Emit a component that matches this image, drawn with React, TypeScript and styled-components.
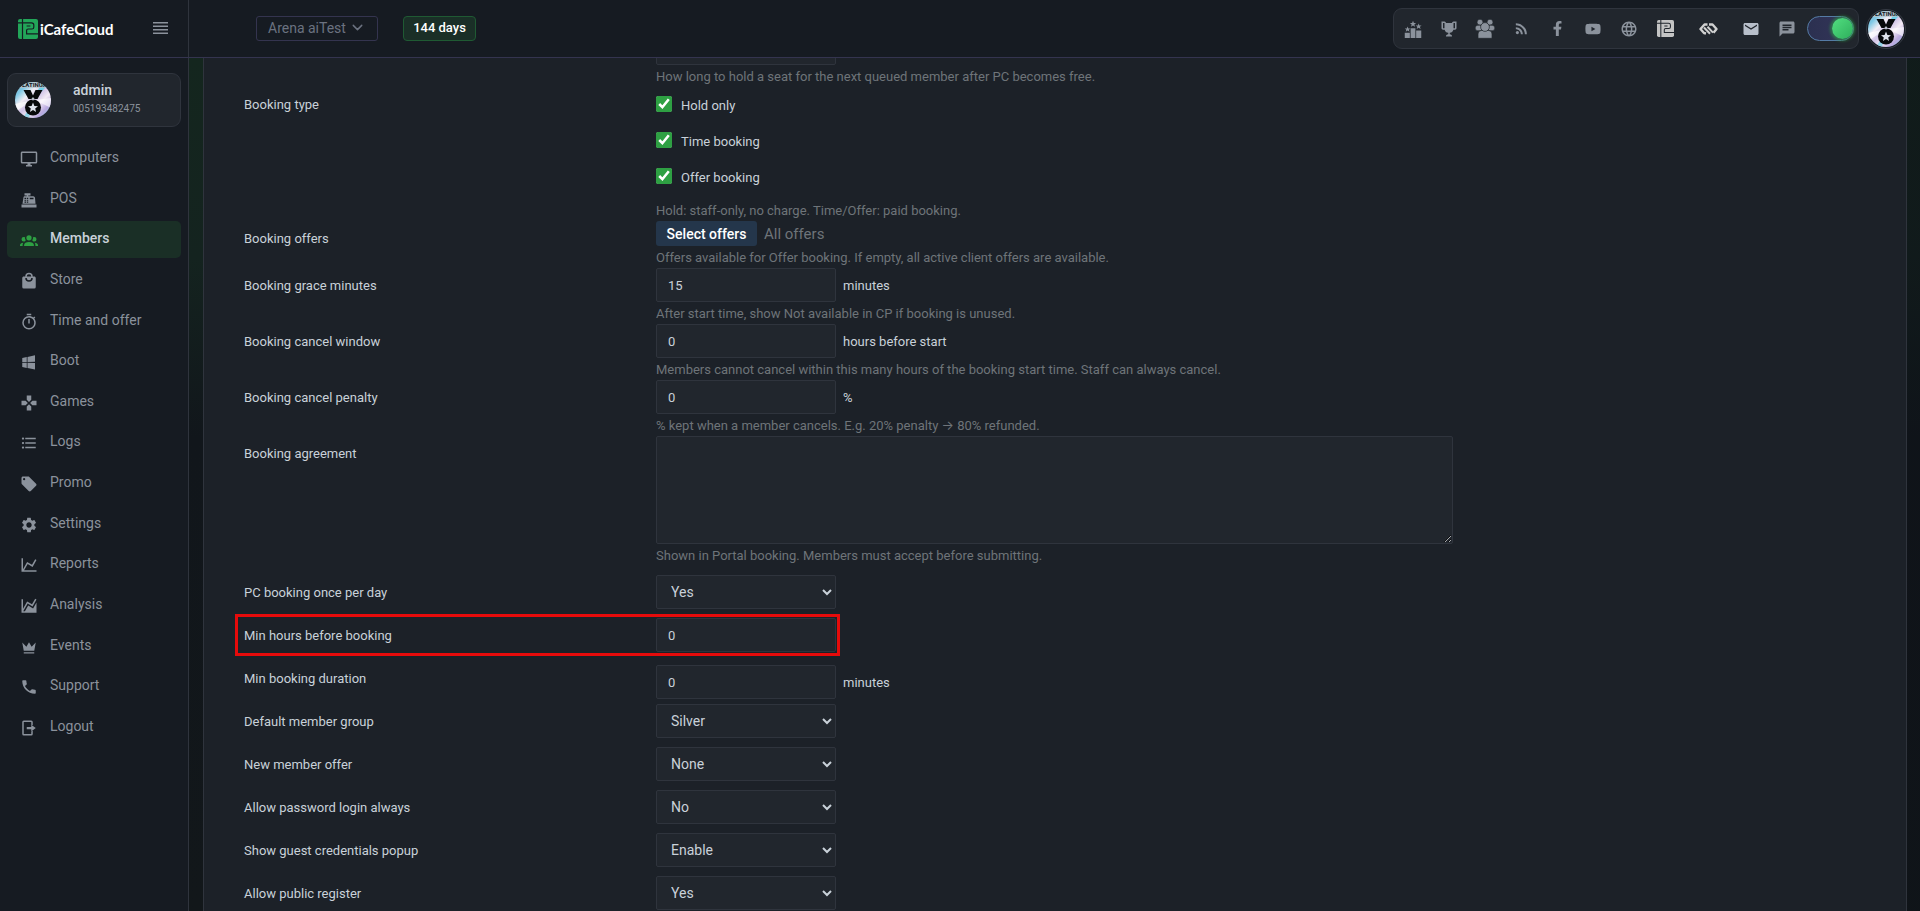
import React, { useId, useState } from 'react';
import styled, { createGlobalStyle } from 'styled-components';
import { MdSettings, MdPhone, MdRssFeed, MdLanguage, MdEmail, MdChat, MdFormatListBulleted } from 'react-icons/md';
import { FaFacebookF, FaYoutube } from 'react-icons/fa';
import { ChevronDown } from 'lucide-react';

const c = {
  chrome: '#161b22',
  panel: '#1c2128',
  field: '#21262d',
  line: '#2f343d',
  rule: '#34344f',
  text: '#c9d1d9',
  muted: '#6e7479',
  icon: '#8b929c',
  green: '#2ea043',
};

const GlobalStyle = createGlobalStyle`
  * { box-sizing: border-box; }
  body { margin: 0; background: #0d1117; font-family: Roboto, Inter, 'Liberation Sans', sans-serif; font-size: 13px; color: ${c.text}; }
  button, input, select, textarea { font: inherit; color: inherit; }
`;

const Page = styled.div`
  display: flex;
  flex-direction: column;
  height: 100vh;
  overflow: hidden;
`;

const Header = styled.header`
  display: flex;
  align-items: center;
  flex: none;
  height: 58px;
  padding-right: 14px;
  background: ${c.chrome};
  border-bottom: 1px solid ${c.rule};
`;

const Brand = styled.div`
  display: flex;
  align-items: center;
  align-self: stretch;
  justify-content: space-between;
  flex: none;
  width: 189px;
  padding: 0 20px 0 18px;
  border-right: 1px solid ${c.line};
`;

const Logo = styled.a`
  display: flex;
  align-items: center;
  gap: 2px;
  color: #fff;
  font: 700 15px/20px Lato, sans-serif;
  text-decoration: none;
`;

const IconButton = styled.button<{ $w?: number; $tone?: string }>`
  display: flex;
  align-items: center;
  justify-content: center;
  width: ${(p) => p.$w ?? 36}px;
  height: 36px;
  padding: 0;
  border: 0;
  background: none;
  color: ${(p) => p.$tone ?? c.icon};
`;

const CafeButton = styled.button`
  display: flex;
  align-items: center;
  justify-content: space-between;
  width: 122px;
  height: 25px;
  margin: 0 25px 0 67px;
  padding: 0 11px 2px 11px;
  border: 1px solid ${c.rule};
  border-radius: 3px;
  background: none;
  color: #6b7280;
  font-size: 14px;
  white-space: nowrap;
`;

const DaysBadge = styled.span`
  display: flex;
  align-items: center;
  justify-content: center;
  width: 73px;
  height: 25px;
  padding-bottom: 2px;
  border: 1px solid #1f5a33;
  border-radius: 4px;
  background: #1a2f27;
  color: #fff;
  font-weight: 500;
  white-space: nowrap;
`;

const Tools = styled.div`
  display: flex;
  align-items: center;
  height: 41px;
  margin: 0 7px 0 auto;
  padding: 0 4px 0 1px;
  border: 1px solid ${c.line};
  border-radius: 9px;
  background: ${c.field};
`;

const Switch = styled.input`
  appearance: none;
  display: flex;
  align-items: center;
  justify-content: flex-end;
  width: 47px;
  height: 25px;
  margin: 0 0 0 2px;
  padding: 0;
  border: 1px solid #557ba5;
  border-radius: 13px;
  background: linear-gradient(90deg, #2b3050, #35355a);
  &::before {
    content: '';
    width: 21px;
    height: 21px;
    border-radius: 50%;
    background: linear-gradient(135deg, #52df80, #2eae5c);
    box-shadow: 0 0 3px 2px rgba(46, 160, 67, 0.6);
  }
  &:not(:checked) { justify-content: flex-start; }
`;

const AvatarButton = styled.button`
  display: flex;
  padding: 1px;
  border: 1px solid #363b44;
  border-radius: 50%;
  background: none;
`;

const Body = styled.div`
  display: flex;
  flex: 1;
  min-height: 0;
`;

const Sidebar = styled.aside`
  flex: none;
  width: 189px;
  padding: 15px 7px;
  border-right: 1px solid ${c.line};
  background: ${c.chrome};
`;

const UserCard = styled.div`
  display: flex;
  align-items: center;
  gap: 22px;
  height: 54px;
  padding: 0 7px;
  border: 1px solid ${c.line};
  border-radius: 9px;
  background: ${c.field};
`;

const UserName = styled.div`
  font-size: 14px;
  font-weight: 500;
  line-height: 18px;
`;

const UserId = styled.div`
  color: ${c.icon};
  font-size: 10px;
  line-height: 20px;
`;

const Nav = styled.nav`
  display: flex;
  flex-direction: column;
  justify-content: space-between;
  height: 606px;
  margin-top: 13px;
`;

const NavLink = styled.a<{ $active: boolean }>`
  display: flex;
  align-items: center;
  gap: 12px;
  height: 37px;
  padding: 0 13px;
  border-radius: 5px;
  background: ${(p) => (p.$active ? '#1a2f26' : 'none')};
  color: ${(p) => (p.$active ? c.text : c.icon)};
  font-size: 14px;
  font-weight: ${(p) => (p.$active ? 500 : 400)};
  line-height: 34px;
  text-decoration: none;
  svg {
    flex: none;
    margin-top: 1px;
    color: ${(p) => (p.$active ? c.green : c.icon)};
  }
  span { align-self: flex-start; }
`;

const Main = styled.main`
  display: flex;
  flex: 1;
  min-width: 0;
  padding: 0 13px 0 14px;
  background: linear-gradient(90deg, rgba(13, 17, 23, 0) 0%, rgba(13, 17, 23, 0.5) 100%),
    linear-gradient(180deg, #14261e 0, #14231f 200px, #11161b 380px, #12171a 100%);
`;

const Panel = styled.section`
  flex: 1;
  min-width: 0;
  overflow: hidden;
  padding: 0 30px 0 28px;
  border: 1px solid ${c.line};
  border-width: 0 1px;
  background: ${c.panel};
`;

const Form = styled.form`
  margin-top: -27px;
`;

const Row = styled.div<{ $gap: number; $marked?: boolean }>`
  position: relative;
  display: grid;
  grid-template-columns: 1fr 2fr 1fr;
  margin-bottom: ${(p) => p.$gap}px;
  ${(p) =>
    p.$marked &&
    `&::after {
      content: '';
      position: absolute;
      top: -4px;
      bottom: -4px;
      left: 3px;
      width: calc(25% + 194px);
      box-sizing: border-box;
      border: 3px solid #e60b0b;
      pointer-events: none;
    }`}
`;

const Label = styled.label`
  height: 34px;
  padding: 1px 12px 0;
  line-height: 34px;
  white-space: nowrap;
`;

const Cell = styled.div<{ $drop?: boolean }>`
  min-width: 0;
  padding: ${(p) => (p.$drop ? 4 : 0)}px 12px 0 13px;
`;

const Line = styled.div`
  display: flex;
  align-items: center;
  gap: 7px;
`;

const Field = styled.input`
  width: 180px;
  height: 34px;
  padding: 0 11px;
  border: 1px solid ${c.line};
  border-radius: 2px;
  background: ${c.field};
  outline: 0;
`;

const Dropdown = styled.select`
  display: block;
  width: 180px;
  height: 34px;
  padding: 0 0 0 10px;
  border: 1px solid ${c.line};
  border-radius: 2px;
  background: ${c.field};
  font-size: 14px;
  outline: 0;
`;

const Area = styled.textarea`
  display: block;
  width: 100%;
  height: 108px;
  padding: 8px 11px;
  border: 1px solid ${c.line};
  border-radius: 2px;
  background: ${c.field};
  color-scheme: dark;
  outline: 0;
  resize: both;
`;

const Help = styled.div`
  padding-top: 2px;
  color: ${c.muted};
  line-height: 20px;
  white-space: nowrap;
`;

const Checks = styled.div`
  display: flex;
  flex-direction: column;
  margin-bottom: 4px;
`;

const Check = styled.label`
  display: flex;
  align-items: center;
  gap: 9px;
  height: 36px;
  input {
    width: 16px;
    height: 16px;
    margin: 0 0 3px;
    accent-color: ${c.green};
  }
`;

const OfferButton = styled.button`
  width: 101px;
  height: 25px;
  padding: 0;
  border: 0;
  border-radius: 3px;
  background: #24364b;
  color: #fff;
  font-size: 14px;
  font-weight: 500;
  white-space: nowrap;
`;

const OfferNote = styled.span`
  color: ${c.muted};
  font-size: 15px;
  line-height: 18px;
`;

function Glyph({ d, size = 18 }: { d: string; size?: number }) {
  return (
    <svg width={size} height={size} viewBox="0 0 24 24" fill="currentColor" fillRule="evenodd" aria-hidden>
      <path d={d} />
    </svg>
  );
}

const shapes = {
  monitor: 'M21,16H3V4H21M21,2H3C1.89,2 1,2.89 1,4V16A2,2 0 0,0 3,18H10V20H8V22H16V20H14V18H21A2,2 0 0,0 23,16V4C23,2.89 22.1,2 21,2Z',
  register:
    'M2,18H22V22H2ZM6.25,7H9V6H6V3H14V6H11V7H17.8C18.8,7 19.8,8 20,9L20.7,17H3.3L4.6,8.6C4.8,7.6 5.4,7 6.25,7ZM13,9V11H18V9ZM6,9V10.5H8V9ZM9,9V10.5H11V9ZM6,11.5V13H8V11.5ZM9,11.5V13H11V11.5ZM6,14V15.5H8V14ZM9,14V15.5H11V14Z',
  group:
    'M12,5.5A3.5,3.5 0 0,1 15.5,9A3.5,3.5 0 0,1 12,12.5A3.5,3.5 0 0,1 8.5,9A3.5,3.5 0 0,1 12,5.5M5,8C5.56,8 6.08,8.15 6.53,8.42C6.38,9.85 6.8,11.27 7.66,12.38C7.16,13.34 6.16,14 5,14A3,3 0 0,1 2,11A3,3 0 0,1 5,8M19,8A3,3 0 0,1 22,11A3,3 0 0,1 19,14C17.84,14 16.84,13.34 16.34,12.38C17.2,11.27 17.62,9.85 17.47,8.42C17.92,8.15 18.44,8 19,8M5.5,18.25C5.5,16.18 8.41,14.5 12,14.5C15.59,14.5 18.5,16.18 18.5,18.25V20H5.5V18.25M0,20V18.5C0,17.11 1.89,15.94 4.45,15.6C3.86,16.28 3.5,17.22 3.5,18.25V20H0M24,20H20.5V18.25C20.5,17.22 20.14,16.28 19.55,15.6C22.11,15.94 24,17.11 24,18.5V20Z',
  bag: 'M12,13A5,5 0 0,1 7,8H9A3,3 0 0,0 12,11A3,3 0 0,0 15,8H17A5,5 0 0,1 12,13M12,3A3,3 0 0,1 15,6H9A3,3 0 0,1 12,3M19,6H17A5,5 0 0,0 12,1A5,5 0 0,0 7,6H5C3.89,6 3,6.89 3,8V20A2,2 0 0,0 5,22H19A2,2 0 0,0 21,20V8C21,6.89 20.1,6 19,6Z',
  timer:
    'M12,20A7,7 0 0,1 5,13A7,7 0 0,1 12,6A7,7 0 0,1 19,13A7,7 0 0,1 12,20M19.03,7.39L20.45,5.97C20,5.46 19.55,5 19.04,4.56L17.62,6C16.07,4.74 14.12,4 12,4A9,9 0 0,0 3,13A9,9 0 0,0 12,22C17,22 21,17.97 21,13C21,10.88 20.26,8.93 19.03,7.39M11,14H13V8H11M15,1H9V3H15V1Z',
  windows: 'M3,12V6.75L9,5.43V11.91L3,12M20,3V11.75L10,11.9V5.21L20,3M3,13L9,13.09V19.9L3,18.75V13M20,13.25V22L10,20.09V13.1L20,13.25Z',
  gamepad: 'M16.5,9L13.5,12L16.5,15H22V9M9,16.5V22H15V16.5L12,13.5M7.5,9H2V15H7.5L10.5,12M15,7.5V2H9V7.5L12,10.5L15,7.5Z',
  tag: 'M5.5,7A1.5,1.5 0 0,1 4,5.5A1.5,1.5 0 0,1 5.5,4A1.5,1.5 0 0,1 7,5.5A1.5,1.5 0 0,1 5.5,7M21.41,11.58L12.41,2.58C12.05,2.22 11.55,2 11,2H4C2.89,2 2,2.89 2,4V11C2,11.55 2.22,12.05 2.59,12.41L11.58,21.41C11.95,21.77 12.45,22 13,22C13.55,22 14.05,21.77 14.41,21.41L21.41,14.41C21.78,14.05 22,13.55 22,13C22,12.44 21.77,11.94 21.41,11.58Z',
  chart: 'M16,11.78L20.24,4.45L21.97,5.45L16.74,14.5L10.23,10.75L5.46,19H22V21H2V3H4V17.54L9.5,8L16,11.78Z',
  area: 'M17.45,15.18L22,7.31V19L22,21H2V3H4V15.54L9.5,6L16,9.78L20.24,2.45L21.97,3.45L16.74,12.5L10.23,8.75L4.31,19H6.57L10.96,11.44L17.45,15.18Z',
  crown: 'M5,17L3,6L8.5,11.5L12,5.5L15.5,11.5L21,6L19,17H5M5,19H19V20.5H5Z',
  exit: 'M5,2H15A2,2 0 0,1 17,4V8H15V4H5V20H15V16H17V20A2,2 0 0,1 15,22H5A2,2 0 0,1 3,20V4A2,2 0 0,1 5,2ZM9,10.5H15V7.5L21,12L15,16.5V13.5H9Z',
  trophy:
    'M20.2,2H18C17.1,2 16,3 16,4H8C8,3 6.9,2 6,2H2V11C2,12 3,13 4,13H6.2C6.6,15 7.9,16.7 11,17V19.1C8.8,19.3 8,20.4 8,21.7V22H16V21.7C16,20.4 15.2,19.3 13,19.1V17C16.1,16.7 17.4,15 17.8,13H20C21,13 22,12 22,11V2ZM4,11V4H6V11ZM20,11H18V4H20Z',
  podium:
    'M1,17H7.8V24H1ZM8.8,11H15.2V24H8.8ZM16.2,14H23V24H16.2ZM4.8,8.5L5.9,11.2H8.6L6.5,12.9L7.3,15.6L4.8,14L2.3,15.6L3.1,12.9L1,11.2H3.700ZM12,1L13.2,3.900H16.200L13.8,5.900L14.7,9L12,7.200L9.300,9L10.2,5.900L7.800,3.900H10.8ZM19.5,4.500L20.600,7.300H23.500L21.200,9.100L22.100,12L19.500,10.300L16.900,12L17.800,9.100L15.500,7.300H18.400Z',
};

const entries: [string, React.ReactNode][] = [
  ['Computers', <Glyph d={shapes.monitor} />],
  ['POS', <Glyph d={shapes.register} />],
  ['Members', <Glyph d={shapes.group} />],
  ['Store', <Glyph d={shapes.bag} />],
  ['Time and offer', <Glyph d={shapes.timer} />],
  ['Boot', <Glyph d={shapes.windows} />],
  ['Games', <Glyph d={shapes.gamepad} />],
  ['Logs', <MdFormatListBulleted size={18} />],
  ['Promo', <Glyph d={shapes.tag} />],
  ['Settings', <MdSettings size={18} />],
  ['Reports', <Glyph d={shapes.chart} />],
  ['Analysis', <Glyph d={shapes.area} />],
  ['Events', <Glyph d={shapes.crown} />],
  ['Support', <MdPhone size={18} />],
  ['Logout', <Glyph d={shapes.exit} />],
];

function Mark({ size, fill, cut }: { size: number; fill: string; cut: string }) {
  return (
    <svg width={size} height={size} viewBox="0 0 20 20" aria-hidden>
      <rect width="20" height="20" rx="2" fill={fill} />
      <path d="M4.5 0V20M0 3.8H13.5Q15.8 3.8 15.8 6V8.2Q15.8 10 14 10H10.2Q8.6 10 8.6 11.6V14.8H20M8.6 7H12.4" fill="none" stroke={cut} strokeWidth="1.2" />
    </svg>
  );
}

function Crowd() {
  return (
    <svg width="20" height="20" viewBox="0 0 20 20" fill="currentColor" stroke={c.field} strokeWidth="0.7" aria-hidden>
      <circle cx="5" cy="3.2" r="3" />
      <circle cx="15" cy="3.2" r="3" />
      <rect x="0.2" y="6.2" width="7" height="5.6" rx="2.6" />
      <rect x="12.8" y="6.2" width="7" height="5.6" rx="2.6" />
      <path d="M3 19.3V15Q3 11.4 6.5 11.4H13.5Q17 11.4 17 15V19.3Z" />
      <circle cx="10" cy="8" r="4.4" />
    </svg>
  );
}

function Hands() {
  return (
    <svg width="19" height="12" viewBox="0 0 19 12" fill="none" stroke="currentColor" strokeLinejoin="round" aria-hidden>
      <path d="M8.500 1.500H5.500L1.500 6L5 10L7 10.500" strokeWidth="2.400" />
      <path d="M5 4.500L11 10.800M8.500 3.800L14 9.600" strokeWidth="2" />
      <path d="M10 1.500H13.500L17.500 6L14.500 9.800" strokeWidth="2.400" />
    </svg>
  );
}

function Avatar() {
  const id = useId();
  return (
    <svg width="36" height="36" viewBox="0 0 36 36" role="img" aria-label="Platinum medal">
      <defs>
        <linearGradient id={`${id}g`} x1="0" y1="0" x2="1" y2="1">
          <stop offset="0" stopColor="#9fb4c4" />
          <stop offset="0.2" stopColor="#7cc7e4" />
          <stop offset="0.36" stopColor="#f2eef5" />
          <stop offset="0.5" stopColor="#cfc2e6" />
          <stop offset="0.64" stopColor="#f3eaf4" />
          <stop offset="0.8" stopColor="#b9a8df" />
          <stop offset="1" stopColor="#8fd6e8" />
        </linearGradient>
        <clipPath id={`${id}c`}>
          <circle cx="18" cy="18" r="18" />
        </clipPath>
      </defs>
      <g clipPath={`url(#${id}c)`}>
        <rect width="36" height="36" fill={`url(#${id}g)`} />
        <path d="M36 0L18 18L27 0Z" fill="#6fd0e8" />
        <path d="M0 22L18 18L0 30Z" fill="#fff" opacity="0.7" />
        <path d="M8 36L18 20L14 36Z" fill="#7ccfe6" opacity="0.8" />
        <path d="M36 16L20 18L36 26Z" fill="#fff" opacity="0.6" />
        <rect width="36" height="6" fill="#b8c2c9" opacity="0.7" />
        <text x="18" y="5" textAnchor="middle" fontSize="6" fontWeight="700" fill="#15181c">PLATINUM</text>
        <path d="M8.500 8H15.500L18 13.500L20.500 8H27.500L22.500 17H13.500Z" fill="#08090b" />
        <circle cx="18" cy="25.500" r="8" fill="#08090b" />
        <circle cx="18" cy="17" r="1.400" fill="#b9bfca" />
        <path d="M18 20.500L19.400 24L23 24.200L20.200 26.500L21.100 30L18 28L14.900 30L15.800 26.500L13 24.200L16.600 24Z" fill="#dfe3ec" />
      </g>
    </svg>
  );
}

interface NumberRowProps {
  label: string;
  value?: string;
  unit?: string;
  help?: string;
  gap?: number;
  drop?: boolean;
  marked?: boolean;
}

function NumberRow({ label, value, unit, help, gap = 0, drop, marked }: NumberRowProps) {
  const id = useId();
  return (
    <Row $gap={gap} $marked={marked}>
      <Label htmlFor={id}>{label}</Label>
      <Cell $drop={drop}>
        <Line>
          <Field id={id} type="text" defaultValue={value} />
          {unit && <span>{unit}</span>}
        </Line>
        {help && <Help>{help}</Help>}
      </Cell>
    </Row>
  );
}

function SelectRow({ label, value }: { label: string; value: string }) {
  const id = useId();
  return (
    <Row $gap={9}>
      <Label htmlFor={id}>{label}</Label>
      <Cell>
        <Dropdown id={id} defaultValue={value}>
          <option>{value}</option>
        </Dropdown>
      </Cell>
    </Row>
  );
}

export default function App() {
  const [online, setOnline] = useState(true);
  return (
    <Page>
      <GlobalStyle />
      <Header>
        <Brand>
          <Logo href="#">
            <Mark size={20} fill="#22a559" cut={c.chrome} />
            iCafeCloud
          </Logo>
          <IconButton $w={15} aria-label="Toggle menu">
            <svg width="15" height="16" viewBox="0 0 15 16" fill="currentColor" aria-hidden>
              <path d="M0 1H15V2.500H0ZM0 4.500H15V6H0ZM0 8H15V9.500H0ZM0 11.500H15V13H0Z" />
            </svg>
          </IconButton>
        </Brand>
        <CafeButton>
          Arena aiTest
          <ChevronDown size={17} />
        </CafeButton>
        <DaysBadge>144 days</DaysBadge>
        <Tools>
          <IconButton aria-label="Ranking"><Glyph d={shapes.podium} /></IconButton>
          <IconButton aria-label="Tournaments"><Glyph d={shapes.trophy} /></IconButton>
          <IconButton aria-label="Community"><Crowd /></IconButton>
          <IconButton aria-label="News feed"><MdRssFeed size={17} /></IconButton>
          <IconButton aria-label="Facebook"><FaFacebookF size={15} /></IconButton>
          <IconButton aria-label="YouTube"><FaYoutube size={16} /></IconButton>
          <IconButton aria-label="Website"><MdLanguage size={18} /></IconButton>
          <IconButton aria-label="iCafeCloud" $tone="#c4c4c4"><Mark size={17} fill="#c4c4c4" cut={c.field} /></IconButton>
          <IconButton aria-label="Partners" $w={50} $tone="#d0d0d0"><Hands /></IconButton>
          <IconButton aria-label="Mail" $tone="#b8bfca"><MdEmail size={18} /></IconButton>
          <IconButton aria-label="Messages"><MdChat size={18} /></IconButton>
          <Switch type="checkbox" role="switch" aria-label="Dark theme" checked={online} onChange={() => setOnline(!online)} />
        </Tools>
        <AvatarButton aria-label="Account"><Avatar /></AvatarButton>
      </Header>
      <Body>
        <Sidebar>
          <UserCard>
            <Avatar />
            <div>
              <UserName>admin</UserName>
              <UserId>005193482475</UserId>
            </div>
          </UserCard>
          <Nav>
            {entries.map(([name, icon]) => (
              <NavLink key={name} href="#" $active={name === 'Members'}>
                {icon}
                <span>{name}</span>
              </NavLink>
            ))}
          </Nav>
        </Sidebar>
        <Main>
          <Panel>
            <Form>
              <NumberRow label="" help="How long to hold a seat for the next queued member after PC becomes free." />
              <Row $gap={0}>
                <Label as="div">Booking type</Label>
                <Cell>
                  <Checks>
                    {['Hold only', 'Time booking', 'Offer booking'].map((t) => (
                      <Check key={t}>
                        <input type="checkbox" defaultChecked />
                        {t}
                      </Check>
                    ))}
                  </Checks>
                  <Help>Hold: staff-only, no charge. Time/Offer: paid booking.</Help>
                </Cell>
              </Row>
              <Row $gap={0}>
                <Label as="div">Booking offers</Label>
                <Cell>
                  <Line>
                    <OfferButton type="button">Select offers</OfferButton>
                    <OfferNote>All offers</OfferNote>
                  </Line>
                  <Help>Offers available for Offer booking. If empty, all active client offers are available.</Help>
                </Cell>
              </Row>
              <NumberRow label="Booking grace minutes" value="15" unit="minutes" help="After start time, show Not available in CP if booking is unused." />
              <NumberRow label="Booking cancel window" value="0" unit="hours before start" help="Members cannot cancel within this many hours of the booking start time. Staff can always cancel." />
              <NumberRow label="Booking cancel penalty" value="0" unit="%" help="% kept when a member cancels. E.g. 20% penalty → 80% refunded." />
              <Row $gap={9}>
                <Label htmlFor="agreement">Booking agreement</Label>
                <Cell>
                  <Area id="agreement" />
                  <Help>Shown in Portal booking. Members must accept before submitting.</Help>
                </Cell>
              </Row>
              <SelectRow label="PC booking once per day" value="Yes" />
              <NumberRow label="Min hours before booking" value="0" gap={9} marked />
              <NumberRow label="Min booking duration" value="0" unit="minutes" gap={5} drop />
              <SelectRow label="Default member group" value="Silver" />
              <SelectRow label="New member offer" value="None" />
              <SelectRow label="Allow password login always" value="No" />
              <SelectRow label="Show guest credentials popup" value="Enable" />
              <SelectRow label="Allow public register" value="Yes" />
            </Form>
          </Panel>
        </Main>
      </Body>
    </Page>
  );
}
